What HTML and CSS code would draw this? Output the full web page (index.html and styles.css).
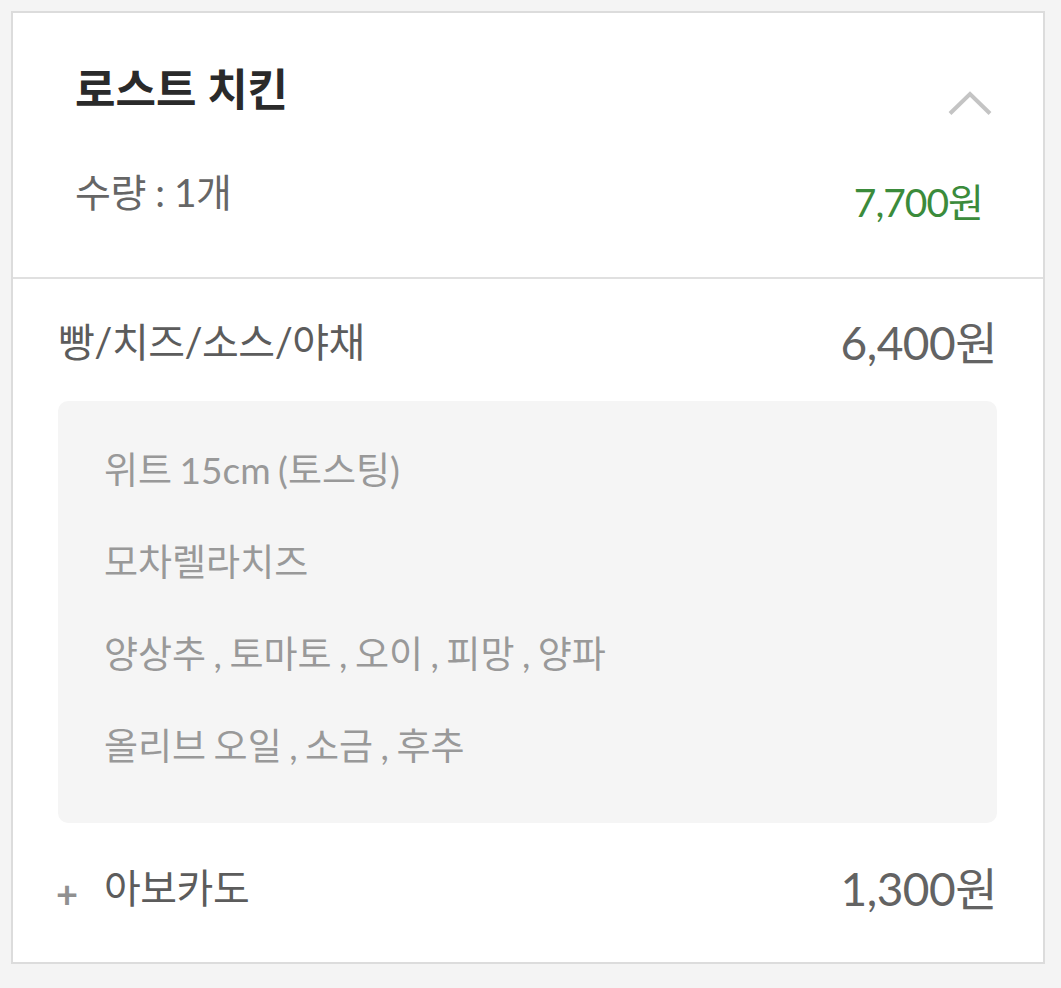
FILE: index.html
```html
<!DOCTYPE html>
<html lang="ko">
<head>
<meta charset="utf-8">
<link rel="stylesheet" href="styles.css">
</head>
<body>
<div class="card">
  <div class="head">
    <div class="head-left">
      <div class="title">로스트 치킨</div>
      <div class="qty">수량 : 1개</div>
    </div>
    <div class="head-right">
      <svg class="chev" width="46" height="26" viewBox="0 0 46 26"><path d="M3 23.5 L23 4 L43 23.5" fill="none" stroke="#c4c4c4" stroke-width="4"/></svg>
      <div class="total">7,700원</div>
    </div>
  </div>
  <div class="body">
    <div class="row">
      <span class="row-name">빵/치즈/소스/야채</span>
      <span class="row-price">6,400원</span>
    </div>
    <div class="opts">
      <div class="opt">위트 15cm (토스팅)</div>
      <div class="opt">모차렐라치즈</div>
      <div class="opt">양상추 , 토마토 , 오이 , 피망 , 양파</div>
      <div class="opt">올리브 오일 , 소금 , 후추</div>
    </div>
    <div class="row add">
      <span class="row-name"><span class="plus">+</span>아보카도</span>
      <span class="row-price">1,300원</span>
    </div>
  </div>
</div>
</body>
</html>
```
FILE: styles.css
```css
html, body {
  margin: 0;
  padding: 0;
  background: #f4f4f4;
}
body {
  padding: 11px 16px 0 11px;
  font-family: Lato, "Noto Sans CJK KR", sans-serif;
}
.card {
  background: #fff;
  border: 2px solid #dcdcdc;
  height: 953px;
  box-sizing: border-box;
}
.head {
  display: flex;
  justify-content: space-between;
  padding: 0 62px;
  height: 264px;
  border-bottom: 2px solid #e0e0e0;
}
.head-left {
  display: flex;
  flex-direction: column;
}
.title {
  font-size: 44px;
  font-weight: 700;
  color: #2a2a2a;
  margin-top: 50px;
  line-height: 52px;
}
.qty {
  font-size: 39px;
  color: #666;
  margin-top: 57px;
  line-height: 40px;
  letter-spacing: -0.5px;
}
.head-right {
  display: flex;
  flex-direction: column;
  align-items: flex-end;
}
.chev {
  margin-top: 77px;
  margin-right: -12px;
}
.total {
  font-size: 39px;
  color: #3b8b3b;
  line-height: 40px;
  margin-top: 66px;
  margin-right: -2px;
  letter-spacing: -1px;
}
.body {
  padding: 0 46px 0 45px;
}
.row {
  display: flex;
  justify-content: space-between;
  align-items: center;
  height: 122px;
  color: #5c5c5c;
}
.row-name {
  font-size: 40px;
  letter-spacing: -0.5px;
  display: flex;
  align-items: center;
}
.row-price {
  font-size: 46px;
  letter-spacing: -0.5px;
  color: #636363;
}
.opts {
  background: #f5f5f5;
  border-radius: 10px;
  padding: 23px 46px 31px;
  display: flex;
  flex-direction: column;
}
.opt {
  font-size: 37px;
  line-height: 92px;
  color: #999;
  word-spacing: -2px;
}
.add {
  height: 126px;
}
.plus {
  font-size: 38px;
  font-weight: 700;
  color: #909090;
  width: 46px;
  margin-left: -2px;
  margin-right: 2px;
  margin-top: 14px;
}
```
